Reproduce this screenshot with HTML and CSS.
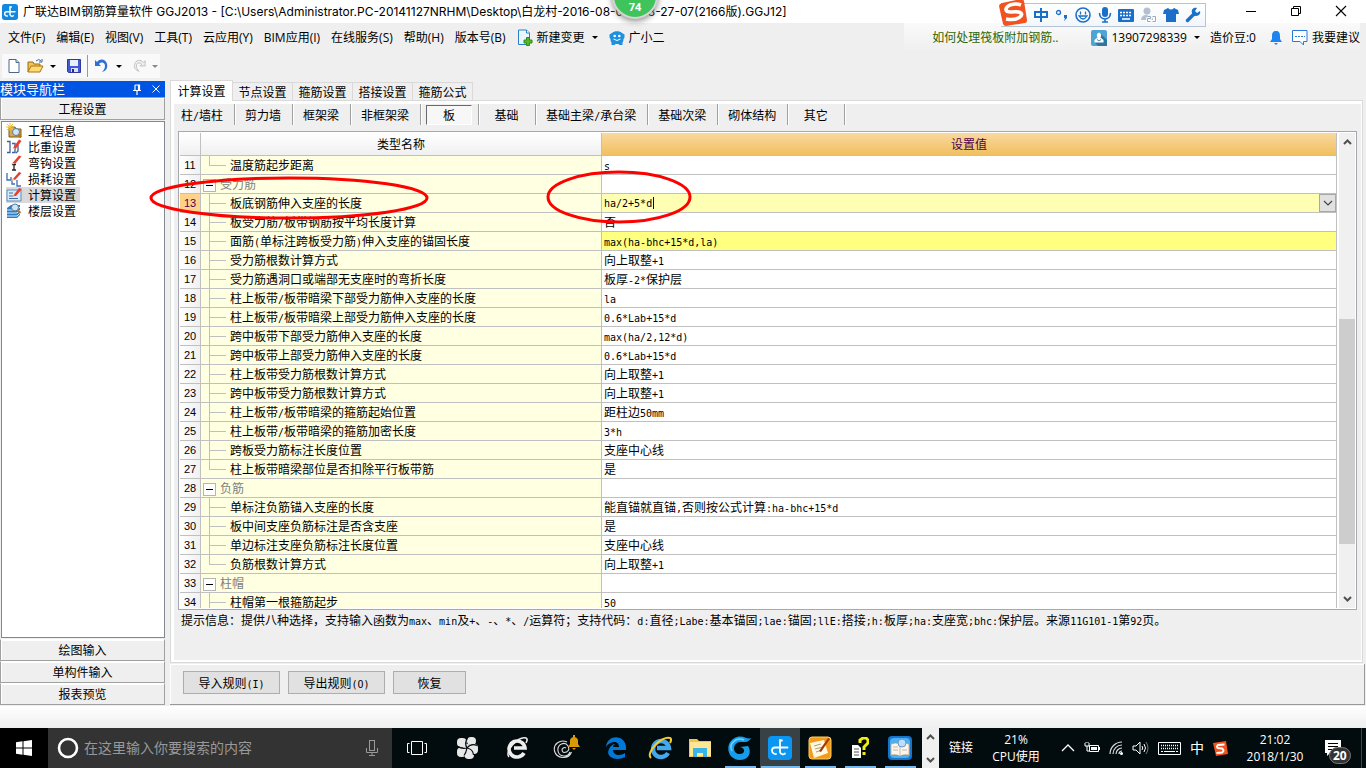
FILE: index.html
```
<!DOCTYPE html>
<html lang="zh-CN">
<head>
<meta charset="utf-8">
<title>广联达BIM钢筋算量软件 GGJ2013</title>
<link rel="stylesheet" href="styles.css">
</head>
<body>
<div class="desktop">
<header class="titlebar">
  <svg class="app-icon" width="16" height="16" viewBox="0 0 24 24"><rect width="24" height="24" rx="4" fill="#1388e0"/><path d="M12 4v12a3 3 0 0 0 5 1.500M8 18a3.500 3.500 0 0 1-4-3.500 3 3 0 0 1 3-3h12.500M14 4.500h-2" fill="none" stroke="#fff" stroke-width="2.200" stroke-linecap="round"/></svg>
  <h1 class="title">广联达BIM钢筋算量软件 GGJ2013 - [C:\Users\Administrator.PC-20141127NRHM\Desktop\白龙村-2016-08-09 - 13-27-07(2166版).GGJ12]</h1>
  <div class="window-buttons">
    <button aria-label="最小化"><svg width="12" height="12" viewBox="0 0 12 12"><path d="M1 6.500h10" stroke="#000"/></svg></button>
    <button aria-label="还原"><svg width="12" height="12" viewBox="0 0 12 12"><path d="M1.500 3.500h7v7h-7zM3.500 3.500v-2h7v7h-2" fill="none" stroke="#000"/></svg></button>
    <button aria-label="关闭"><svg width="12" height="12" viewBox="0 0 12 12"><path d="M1 1l10 10M11 1L1 11" stroke="#000" stroke-width="1.100"/></svg></button>
  </div>
</header>

<nav class="menubar">
  <button>文件(F)</button><button>编辑(E)</button><button>视图(V)</button><button>工具(T)</button><button>云应用(Y)</button><button>BIM应用(I)</button><button>在线服务(S)</button><button>帮助(H)</button><button>版本号(B)</button>
  <button class="with-icon"><svg width="16" height="17" viewBox="0 0 16 17"><path d="M1.500 1h8l3 3v11.500h-11z" fill="#eaf6ff" stroke="#2b7fc4"/><path d="M9.500 1v3h3" fill="#fff" stroke="#2b7fc4"/><path d="M9.500 8.500h3v2.500h2.500v3h-2.500v2.500h-3v-2.500H7v-3h2.500z" fill="#58b530" stroke="#2f8a18"/></svg>新建变更 <i class="arrow"></i></button>
  <button class="with-icon"><svg width="16" height="16" viewBox="0 0 16 16"><path d="M3 3C5 .5 11 .5 13 3l2.500 1.500v3L14.500 9c0 2-.5 3-1 3.500V15h-3l-1-1h-3l-1 1h-3v-2.500C2 12 1.500 11 1.500 9L.5 7.500v-3z" fill="#1f8fe0"/><circle cx="5.700" cy="6" r="1.300" fill="#fff"/><circle cx="10.300" cy="6" r="1.300" fill="#fff"/><path d="M4.500 9q3.500 3 7 0" fill="none" stroke="#fff"/></svg>广小二</button>
  <div class="account">
    <a class="tip-link" href="#">如何处理筏板附加钢筋..</a>
    <button class="with-icon user"><svg width="16" height="16" viewBox="0 0 16 16"><rect width="16" height="16" rx="2" fill="#4fa5d2"/><path d="M10 4l6 6v6H7l-3-3z" fill="#2e769f"/><path d="M8 2.500a2.600 3 0 0 1 1.500 5L12.500 10v2.500h-9V10l3-2.500A2.600 3 0 0 1 8 2.500z" fill="#fff"/><path d="M6 9.500l2 1.500 2-1.500" fill="none" stroke="#3b88b4"/></svg>13907298339 <i class="arrow"></i></button>
    <span class="beans">造价豆:0</span>
    <svg width="12" height="16" viewBox="0 0 12 16"><path d="M6 1c3 0 4 2 4 5v3l2 3H0l2-3V6c0-3 1-5 4-5zM4 13h4l-2 2z" fill="#1f83f0"/></svg>
    <button class="with-icon suggest"><svg width="16" height="16" viewBox="0 0 16 16"><path d="M1 .5h14v11h-3.500V15L8 11.500H.500V.5z" fill="#fff" stroke="#2a78d8"/><path d="M3 6.500h10" stroke="#2a78d8" stroke-dasharray="2 1"/></svg>我要建议</button>
  </div>
</nav>

<div class="toolbar">
  <div class="tools">
    <button aria-label="新建"><svg width="16" height="16" viewBox="0 0 16 16"><path d="M3 1.500h7l3 3v10H3z" fill="#fff" stroke="#4a678c"/><path d="M10 1.500v3h3" fill="#cfe0f3" stroke="#4a678c"/></svg></button>
    <button aria-label="打开"><svg width="17" height="16" viewBox="0 0 17 16"><path d="M1 14V4h5l1 2h6v3" fill="#f3c34e" stroke="#9b6b15"/><path d="M1 14l3-6h12l-3 6z" fill="#ffdb72" stroke="#a87518"/><path d="M9 3q3-3 5 0M15 1v3h-3" fill="none" stroke="#3e6a97"/></svg></button><i class="arrow"></i>
    <button aria-label="保存"><svg width="16" height="16" viewBox="0 0 16 16"><path d="M1.500 1.500h13v13h-12l-1-1z" fill="#4659d4" stroke="#3039a0"/><path d="M4 2h8v6H4z" fill="#e8eefc"/><path d="M5 10h7v4H5z" fill="#dce0f2"/><path d="M6 11h2v3H6z" fill="#27307f"/></svg></button><i class="tool-sep"></i>
    <button aria-label="撤销"><svg width="16" height="16" viewBox="0 0 16 16"><path d="M1 2v6h6L5 6c3-3 6-1 6 2 0 2-1 4-3 6 4-1 6-4 5-8C12 1 6 0 3 4z" fill="#2f6fd4"/></svg></button><i class="arrow"></i>
    <button aria-label="重做"><svg width="14" height="14" viewBox="0 0 16 16"><path d="M15 2v6H9l2-2C8 3 5 5 5 8c0 2 1 4 3 6-4-1-6-4-5-8C4 1 10 0 13 4z" fill="#eee" stroke="#bbb"/></svg></button><i class="arrow dim"></i>
  </div>
</div>

<main class="workspace">
  <aside class="sidebar">
    <div class="side-title"><span>模块导航栏</span>
      <svg width="10" height="11" viewBox="0 0 10 11"><path d="M3 1h4.500v5.500M3 1v5.500M1 6.500h8M5 6.500V11M6.500 1v5" fill="none" stroke="#fff" stroke-width="1.200"/></svg>
      <svg width="10" height="10" viewBox="0 0 10 10"><path d="M1.500 1.500l7 7M8.500 1.500l-7 7" stroke="#fff"/></svg>
    </div>
    <button class="side-button">工程设置</button>
    <ul class="tree">
      <li><svg width="16" height="16" viewBox="0 0 16 16"><path d="M3 4h6l1 2h5v8H3z" fill="#d9a848" stroke="#7a5a1c"/><circle cx="10" cy="9" r="3.500" fill="#cfe6f7" stroke="#557da0"/><path d="M12.500 11.500l2.500 3" stroke="#c07010" stroke-width="2"/><path d="M4 0v8M0 4h8M1 1l6 6M7 1L1 7" stroke="#f4c52c"/></svg>工程信息</li>
      <li><svg width="16" height="16" viewBox="0 0 16 16"><path d="M1 2.500h3v11H1M6 4.500h3v9H6" fill="none" stroke="#3c5f9e" stroke-width="1.300"/><path d="M12 6v6l-2 2" fill="none" stroke="#3c5f9e" stroke-width="1.300"/><path d="M7 9l6-8.500 2.500 1.500L10 9.500z" fill="#e8402e"/><path d="M6.500 10.500L7.200 8.500l2 1z" fill="#f5c79a"/></svg>比重设置</li>
      <li><svg width="16" height="16" viewBox="0 0 16 16"><path d="M6 9.500h4M8 9.500V15M6 15h4" stroke="#222" stroke-width="1.300"/><path d="M6.500 8L13 .5l2.500 1L9 9z" fill="#e8402e"/><path d="M5 9.500L6.500 7.500 8.500 9z" fill="#f5c79a"/></svg>弯钩设置</li>
      <li><svg width="16" height="16" viewBox="0 0 16 16"><path d="M1 2v7h4V6M6 9v4h3M11 9v6h4" fill="none" stroke="#3d6db5" stroke-width="1.300"/><path d="M6 9l7-8 2.500 1L9 9z" fill="#e8402e"/><path d="M5 10l1.500-2.500L9 9z" fill="#f5c79a"/></svg>损耗设置</li>
      <li class="current"><svg width="16" height="16" viewBox="0 0 16 16"><path d="M1 3h14v11H1z" fill="#d7eafb" stroke="#5f8cc0"/><path d="M3 6h4M3 11.500h9M3 9h5" stroke="#3e6da8"/><path d="M7 9l6-8 3 1-6 7z" fill="#e8402e"/><path d="M6 10.500L7.500 8l2 1.500z" fill="#f5c79a"/></svg>计算设置</li>
      <li><svg width="16" height="16" viewBox="0 0 16 16"><path d="M1 5l4-3h9v10l-3 3H1z" fill="#2d7cc4"/><path d="M1 7h10l3-3M1 10h10l3-3M1 13h10l3-3" fill="none" stroke="#d7efff"/><circle cx="9" cy="4.500" r="3.500" fill="#cfe6f2" stroke="#557da0"/><path d="M11.500 7l3 3" stroke="#b07832" stroke-width="2"/></svg>楼层设置</li>
    </ul>
    <button class="side-button">绘图输入</button>
    <button class="side-button">单构件输入</button>
    <button class="side-button">报表预览</button>
  </aside>

  <section class="content">
    <div class="tabs"><button class="active">计算设置</button><button>节点设置</button><button>箍筋设置</button><button>搭接设置</button><button>箍筋公式</button></div>
    <div class="page"><div class="page-inner">
      <div class="subtabs"><button>柱<span class="m">/</span>墙柱</button><button>剪力墙</button><button>框架梁</button><button>非框架梁</button><button class="pressed"><span>板</span></button><button>基础</button><button>基础主梁<span class="m">/</span>承台梁</button><button>基础次梁</button><button>砌体结构</button><button>其它</button></div>
      <div class="grid">
        <div class="grid-view">
        <table>
          <colgroup><col class="c-num"><col class="c-name"><col></colgroup>
          <thead><tr><th></th><th>类型名称</th><th class="hot">设置值</th></tr></thead>
          <tbody>
          <tr><td>11</td><td class="leaf last">温度筋起步距离</td><td><span class="m">s</span></td></tr>
          <tr><td>12</td><td class="group"><button class="fold" aria-label="折叠"></button>受力筋</td><td></td></tr>
          <tr class="editing"><td>13</td><td class="leaf">板底钢筋伸入支座的长度</td><td><div class="combo"><input class="m" type="text" value="ha/2+5*d" aria-label="板底钢筋伸入支座的长度"><i class="caret"></i><button aria-label="展开选项"><svg width="10" height="6" viewBox="0 0 10 6"><path d="M1 1l4 4 4-4" fill="none" stroke="#444" stroke-width="1.200"/></svg></button></div></td></tr>
          <tr><td>14</td><td class="leaf">板受力筋<span class="m">/</span>板带钢筋按平均长度计算</td><td>否</td></tr>
          <tr class="changed"><td>15</td><td class="leaf">面筋<span class="m">(</span>单标注跨板受力筋<span class="m">)</span>伸入支座的锚固长度</td><td><span class="m">max(ha-bhc+15*d,la)</span></td></tr>
          <tr><td>16</td><td class="leaf">受力筋根数计算方式</td><td>向上取整<span class="m">+1</span></td></tr>
          <tr><td>17</td><td class="leaf">受力筋遇洞口或端部无支座时的弯折长度</td><td>板厚<span class="m">-2*</span>保护层</td></tr>
          <tr><td>18</td><td class="leaf">柱上板带<span class="m">/</span>板带暗梁下部受力筋伸入支座的长度</td><td><span class="m">la</span></td></tr>
          <tr><td>19</td><td class="leaf">柱上板带<span class="m">/</span>板带暗梁上部受力筋伸入支座的长度</td><td><span class="m">0.6*Lab+15*d</span></td></tr>
          <tr><td>20</td><td class="leaf">跨中板带下部受力筋伸入支座的长度</td><td><span class="m">max(ha/2,12*d)</span></td></tr>
          <tr><td>21</td><td class="leaf">跨中板带上部受力筋伸入支座的长度</td><td><span class="m">0.6*Lab+15*d</span></td></tr>
          <tr><td>22</td><td class="leaf">柱上板带受力筋根数计算方式</td><td>向上取整<span class="m">+1</span></td></tr>
          <tr><td>23</td><td class="leaf">跨中板带受力筋根数计算方式</td><td>向上取整<span class="m">+1</span></td></tr>
          <tr><td>24</td><td class="leaf">柱上板带<span class="m">/</span>板带暗梁的箍筋起始位置</td><td>距柱边<span class="m">50mm</span></td></tr>
          <tr><td>25</td><td class="leaf">柱上板带<span class="m">/</span>板带暗梁的箍筋加密长度</td><td><span class="m">3*h</span></td></tr>
          <tr><td>26</td><td class="leaf">跨板受力筋标注长度位置</td><td>支座中心线</td></tr>
          <tr><td>27</td><td class="leaf last">柱上板带暗梁部位是否扣除平行板带筋</td><td>是</td></tr>
          <tr><td>28</td><td class="group"><button class="fold" aria-label="折叠"></button>负筋</td><td></td></tr>
          <tr><td>29</td><td class="leaf">单标注负筋锚入支座的长度</td><td>能直锚就直锚<span class="m">,</span>否则按公式计算<span class="m">:ha-bhc+15*d</span></td></tr>
          <tr><td>30</td><td class="leaf">板中间支座负筋标注是否含支座</td><td>是</td></tr>
          <tr><td>31</td><td class="leaf">单边标注支座负筋标注长度位置</td><td>支座中心线</td></tr>
          <tr><td>32</td><td class="leaf last">负筋根数计算方式</td><td>向上取整<span class="m">+1</span></td></tr>
          <tr><td>33</td><td class="group"><button class="fold" aria-label="折叠"></button>柱帽</td><td></td></tr>
          <tr><td>34</td><td class="leaf">柱帽第一根箍筋起步</td><td><span class="m">50</span></td></tr>
          </tbody>
        </table>
        </div>
        <div class="scrollbar">
          <svg width="9" height="6" viewBox="0 0 9 6"><path d="M1 5l3.500-3.500L8 5" fill="none" stroke="#505050" stroke-width="2"/></svg>
          <i class="before"></i><i class="thumb"></i><i class="after"></i>
          <svg width="9" height="6" viewBox="0 0 9 6"><path d="M1 1l3.500 3.500L8 1" fill="none" stroke="#505050" stroke-width="2"/></svg>
        </div>
      </div>
      <p class="hint">提示信息：提供八种选择，支持输入函数为<span class="m">max</span>、<span class="m">min</span>及<span class="m">+</span>、<span class="m">-</span>、<span class="m">*</span>、<span class="m">/</span>运算符；支持代码：<span class="m">d:</span>直径<span class="m">;Labe:</span>基本锚固<span class="m">;lae:</span>锚固<span class="m">;llE:</span>搭接<span class="m">;h:</span>板厚<span class="m">;ha:</span>支座宽<span class="m">;bhc:</span>保护层。来源<span class="m">11G101-1</span>第<span class="m">92</span>页。</p>
    </div></div>
    <div class="actions"><button>导入规则<span class="m">(I)</span></button><button>导出规则<span class="m">(O)</span></button><button class="short">恢复</button></div>
  </section>
</main>
<div class="status"></div>

<footer class="taskbar">
  <button class="start" aria-label="开始"><svg width="16" height="16" viewBox="0 0 16 16"><path d="M0 2.200l6.500-.9v6.200H0zM7.500 1.200L16 0v7.500H7.500zM0 8.500h6.500v6.200L0 13.800zM7.500 8.500H16V16l-8.500-1.200z" fill="#fff"/></svg></button>
  <label class="search"><svg width="22" height="22" viewBox="0 0 22 22"><circle cx="11" cy="11" r="9" fill="none" stroke="#fff" stroke-width="2.600"/></svg><input type="text" placeholder="在这里输入你要搜索的内容" aria-label="搜索"><svg width="12" height="16" viewBox="0 0 12 16"><rect x="3.500" y=".5" width="5" height="10" fill="none" stroke="#999"/><path d="M.5 8v4.500h11V8M6 12.500v3M3 15.500h6" fill="none" stroke="#999"/></svg></label>
  <div class="apps wide">
    <button aria-label="任务视图"><svg width="22" height="16" viewBox="0 0 22 16"><path d="M5.500 1.500h11v13h-11zM3.500 3.500H1.500v9h2M18.500 3.500h2v9h-2" fill="none" stroke="#fff"/></svg></button>
    <button aria-label="风车"><svg width="22" height="22" viewBox="0 0 22 22"><g fill="#e8e8e8"><rect x="1" y="1" width="9.500" height="9" rx="4"/><rect x="11" y="0" width="9" height="8" rx="4"/><rect x="13" y="7" width="9" height="10" rx="4"/><rect x="8.500" y="12" width="9.500" height="10" rx="4"/><rect x="1" y="10.500" width="9" height="9.500" rx="4"/><circle cx="11" cy="11" r="4"/></g><path d="M11 11Q8 6 11.500 1M11 11q4-5 10-2.500M11 11q6 1 6.500 7M11 11q-1 5-3 7.500M11 11Q5 12 2 9.500" fill="none" stroke="#020b0e" stroke-width="1.200"/></svg></button>
    <button aria-label="浏览器"><svg width="24" height="24" viewBox="0 0 24 24"><path d="M19 17a8 8 0 1 1 1-5H9" fill="none" stroke="#eee" stroke-width="3.600"/><path d="M4 21C-1 16 13 0 21 2c2 1 1 3 0 5" fill="none" stroke="#eee" stroke-width="1.500"/></svg></button>
    <button aria-label="通知助手"><svg width="28" height="26" viewBox="0 0 28 26"><path d="M13 13a2.500 2.500 0 1 0-2 4.500c4 0 6-3 4-6.500-3-5-11-2-10 5 1 6 10 7 12 1M14 7C7 4 0 9 1.500 16c2 8 14 9 17 1" fill="none" stroke="#ddd" stroke-width="1.100"/><path d="M15 12l2-3V5c1-4 7-4 8 0v4l2 3zM19 13h4l-2 2zM20 0h2v3h-2z" fill="#d99a09"/></svg></button>
    <button aria-label="Edge"><svg width="22" height="22" viewBox="0 0 22 22"><path d="M1 10C2-3 21-3 21 11v2H8c0 6 8 6 12 3v4C11 25 0 20 4 12c1-3 4-5 6-5-2 1-2 3-2 3h6c0-7-9-6-13 0z" fill="#0078d7"/></svg></button>
  </div>
  <div class="apps">
    <button aria-label="Internet Explorer"><svg width="24" height="24" viewBox="0 0 24 24"><path d="M20 17a8 8 0 1 1 1-5H9" fill="none" stroke="#43a9ec" stroke-width="4.400"/><path d="M3 22C-3 17 14-1 22 2c2 1 1 3 0 5" fill="none" stroke="#f2cb2f" stroke-width="2"/></svg></button>
    <button aria-label="文件资源管理器"><svg width="22" height="20" viewBox="0 0 22 20"><path d="M0 1h8l2 2h12v16H0z" fill="#f0c352"/><path d="M1 4h21v14H1z" fill="#ffe693"/><path d="M4 19v-9h14v9h-4v-4H8v4z" fill="#39b4e8"/></svg></button>
    <button class="running" aria-label="G浏览器"><svg width="24" height="24" viewBox="0 0 24 24"><path d="M23 2C19 4 16-1 9 1-4 5-2 24 12 24c9 0 12-8 8-14l-8 1c6 1 5 7 0 7-8 0-8-11 0-12 5 0 8 1 11-4z" fill="#159cea"/><path d="M4 15C0 7 9 1 16 4" fill="none" stroke="#71d2ff" stroke-width="1.500"/></svg></button>
    <button class="running active" aria-label="广联达"><svg width="24" height="24" viewBox="0 0 24 24"><rect width="24" height="24" rx="4" fill="#0c96f3"/><path d="M12 4v12a3 3 0 0 0 5 1.500M8 18a3.500 3.500 0 0 1-4-3.500 3 3 0 0 1 3-3h12.500M14 4.500h-2" fill="none" stroke="#fff" stroke-width="1.800" stroke-linecap="round"/></svg></button>
    <button class="running" aria-label="记事"><svg width="24" height="24" viewBox="0 0 24 24"><rect x="1" y="1" width="22" height="22" rx="3" fill="#f49a18" stroke="#ffcf62"/><path d="M2 7l14-3 4 13-14 5z" fill="#fff7df"/><path d="M6 10l7-2M7 13l8-2M8 16l6-2" stroke="#a99b80"/><path d="M11 15L20 2l2 1-9 13z" fill="#9b3d11"/></svg></button>
    <button class="running" aria-label="帮助"><svg width="18" height="22" viewBox="0 0 18 22"><path d="M1 8h6l3 3v10H1z" fill="#fff"/><path d="M3 12h5M3 15h5M3 18h5" stroke="#555"/><path d="M9 6V3l3-2h3l2 2v3l-4 4v3M13 15v3" fill="none" stroke="#f5ec12" stroke-width="3"/></svg></button>
    <button class="running" aria-label="阅读"><svg width="24" height="24" viewBox="0 0 24 24"><rect width="24" height="24" rx="4" fill="#1674ce"/><rect x="2" y="2" width="20" height="20" rx="4" fill="#4bb1f2"/><path d="M3 8q5-2 9 0 4-2 9 0v11q-5-1-9 1-4-2-9-1z" fill="#fff5e6" stroke="#b08a60" stroke-width=".6"/><path d="M12 9v11M5 11h5M5 14h5M14 14h5" stroke="#bbb"/><circle cx="14" cy="7" r="4" fill="#b9e0ff" stroke="#6a98cb"/></svg></button>
  </div>
  <div class="task-scroll"><svg width="9" height="6" viewBox="0 0 9 6"><path d="M1 5l3.500-3.500L8 5" fill="none" stroke="#505050" stroke-width="2"/></svg><svg width="9" height="6" viewBox="0 0 9 6"><path d="M1 1l3.500 3.500L8 1" fill="none" stroke="#505050" stroke-width="2"/></svg></div>
  <span class="links">链接</span>
  <div class="cpu">21%<br>CPU使用</div>
  <div class="tray">
    <svg width="14" height="8" viewBox="0 0 14 8"><path d="M1 7l6-6 6 6" fill="none" stroke="#fff" stroke-width="1.300"/></svg>
    <svg width="16" height="12" viewBox="0 0 16 12"><path d="M5.500 3.500h9v6h-9zM15.500 5v3M1 1v3h4V1M2 0v1M4 0v1M3 4v5h2" fill="none" stroke="#fff"/><path d="M7 5h6v3H7z" fill="#fff"/></svg>
    <svg width="14" height="14" viewBox="0 0 14 14"><path d="M1 13A12 12 0 0 1 13 1M4 13a9 9 0 0 1 9-9M7 13a6 6 0 0 1 6-6M10 13a3 3 0 0 1 3-3" fill="none" stroke="#ddd" stroke-width="1.200"/><circle cx="12.500" cy="12.500" r="1.500" fill="#fff"/></svg>
    <svg width="17" height="14" viewBox="0 0 17 14"><path d="M1 5h3l4-4v12L4 9H1z" fill="none" stroke="#fff"/><path d="M10 5q1.500 2 0 4M12 3q3 4 0 8" fill="none" stroke="#fff"/><path d="M14 1q4 6 0 12" fill="none" stroke="#777"/></svg>
    <svg width="23" height="13" viewBox="0 0 23 13"><path d="M.5.5h22v12H.500z" fill="none" stroke="#fff"/><path d="M3 3.500h17M3 6.500h17" stroke="#fff" stroke-dasharray="1 1" stroke-width="1.500"/><path d="M3 9.500h2M6 9.500h11M18 9.500h2" stroke="#fff"/></svg>
    <span class="ime">中</span>
    <svg width="15" height="15" viewBox="0 0 15 15"><path d="M0 2l13-2 2 13-12 2z" fill="#f4511e"/><path d="M11.500 3.500L5 4q-2 2 0 3l4 .5q3 2 0 4l-5.500.5" fill="none" stroke="#fff" stroke-width="2"/></svg>
  </div>
  <div class="clock">21:02<br>2018/1/30</div>
  <button class="notice" aria-label="通知"><svg width="18" height="16" viewBox="0 0 18 16"><path d="M1 0h16v13H6l-3 3v-3H1z" fill="#fff"/><path d="M4 3.500h10M4 6.500h10M4 9.500h6" stroke="#000"/></svg><b>20</b></button>
</footer>
</div>

<svg class="marks" width="700" height="230" viewBox="0 0 700 230"><ellipse cx="289" cy="198" rx="138" ry="20"/><ellipse cx="619" cy="197" rx="71" ry="25"/></svg>
<div class="speed">74</div>
<div class="ime-bar">
  <svg class="sogou" width="28" height="28" viewBox="0 0 28 28"><path d="M3 4L22 0q2 0 3 2l3 19q0 3-2 3L7 27q-2 0-3-2L0 7q0-2 3-3z" fill="#f0531f"/><path d="M22 6q-5-2-11 0c-6 3-5 7 1 7 9-1 12 1 10 4-3 4-9 4-15 3" fill="none" stroke="#fff" stroke-width="3.600"/></svg>
  <svg width="16" height="16" viewBox="0 0 16 16"><path d="M2 5h12v5H2zM8 1v14" fill="none" stroke="#1b6fc8" stroke-width="2"/></svg>
  <svg width="14" height="14" viewBox="0 0 14 14"><circle cx="3.500" cy="4.500" r="2" fill="none" stroke="#1b6fc8" stroke-width="1.300"/><path d="M9 7h3v3l-3 3 1-3H9z" fill="#1b6fc8"/></svg>
  <svg width="16" height="16" viewBox="0 0 16 16"><circle cx="8" cy="8" r="7" fill="none" stroke="#1b6fc8" stroke-width="1.600"/><path d="M5.500 4.500v3M10.500 4.500v3M4 9q4 6 8 0z" fill="none" stroke="#1b6fc8" stroke-width="1.300"/></svg>
  <svg width="14" height="16" viewBox="0 0 14 16"><rect x="4" y="0" width="6" height="10" rx="3" fill="#1b6fc8"/><path d="M1.500 6c0 8 11 8 11 0M7 12v3M4 15h6" fill="none" stroke="#1b6fc8" stroke-width="1.600"/></svg>
  <svg width="16" height="13" viewBox="0 0 16 13"><rect width="16" height="13" rx="1" fill="#1b6fc8"/><path d="M2 3.500h12M2 6.500h12" stroke="#fff" stroke-dasharray="2 1" stroke-width="1.500"/><path d="M4 10h8" stroke="#fff" stroke-width="1.500"/></svg>
  <svg width="17" height="16" viewBox="0 0 17 16"><circle cx="7" cy="4" r="3.500" fill="#b5bfd2"/><path d="M1 13c0-7 12-7 12 0z" fill="#b5bfd2"/><path d="M7.500 9.500h3v2h-3v3h3M12.500 9.500h3v5h-3" fill="none" stroke="#fff" stroke-width="2.600"/><path d="M7.500 9.500h3v2h-3v3h3M12.500 9.500h3v5h-3" fill="none" stroke="#9aa6bd"/></svg>
  <svg width="16" height="14" viewBox="0 0 16 14"><path d="M1 2l4-2q3 3 6 0l4 2 1 4h-3v8H3V6H0z" fill="#1b6fc8"/></svg>
  <svg width="16" height="16" viewBox="0 0 16 16"><path d="M2.500 13.500L9 7" stroke="#1b6fc8" stroke-width="3.400" stroke-linecap="round"/><path d="M15 4l-3 2-2-2 2-3C8 0 6 3 7 6s4 4 7 2q2-2 1-4z" fill="#1b6fc8"/></svg>
</div>
</body>
</html>
```
FILE: styles.css
```
* { box-sizing: border-box; }
body {
  margin: 0;
  font: 12px/16px "Open Sans", "Noto Sans CJK SC", sans-serif;
  color: #000;
  background: #efefef;
}
button, input { font: inherit; color: inherit; padding: 0; margin: 0; border: 0; background: none; }
svg { display: block; flex: none; }
i { flex: none; }
.desktop { display: flex; flex-direction: column; height: 100vh; overflow: hidden; }

/* title bar */
.titlebar { display: flex; align-items: center; height: 23px; padding: 0 19px 0 2px; background: #fff; flex: none; }
.title { margin: 0 auto 0 5px; font: 400 12px/16px Inter, "Noto Sans CJK SC", sans-serif; white-space: nowrap; }
.window-buttons { display: flex; gap: 33px; padding-bottom: 2px; }

/* menu */
.menubar { display: flex; align-items: center; gap: 11px; height: 29px; padding: 0 6px 0 8px; flex: none; white-space: nowrap; }
.with-icon { display: flex; align-items: center; gap: 4px; }
.arrow { width: 0; height: 0; border: 3px solid transparent; border-top-color: #000; border-bottom: 0; margin-left: 3px; }
.arrow.dim { border-top-color: #888; }
.account { display: flex; align-items: center; margin-left: auto; gap: 10px; height: 100%; background: linear-gradient(#fafafa, #efefef); }
.tip-link { padding: 0 23px 0 28px; color: #2e6500; text-decoration: none; }
.beans { padding-right: 4px; }

.toolbar { height: 28px; padding: 2px; flex: none; }
.tools { display: flex; align-items: center; width: 158px; height: 24px; padding: 0 2px; background: #f9f9f9; }
.tools button { padding: 0 3px 0 2px; }
.tools .arrow { margin: 0 8px 0 3px; }
.tool-sep { width: 1px; height: 22px; margin: 0 4px 0 2px; background: #999; }

/* navigation pane */
.workspace { display: flex; flex: 1; min-height: 0; gap: 5px; font-family: "Noto Sans CJK SC", sans-serif; }
.m { font-family: "DejaVu Sans Mono", monospace; font-size: 10px; line-height: 10px; }
.sidebar { display: flex; flex-direction: column; width: 165px; flex: none; padding-bottom: 1px; }
.side-title { display: flex; align-items: center; gap: 9px; height: 17px; padding-right: 4px; border-top: 1px solid #efefef; background: #0054e3; color: #fff; }
.side-title span { flex: 1; font-size: 13px; }
.side-button { height: 22px; flex: none; border: 1px solid #a0a0a0; border-top-color: #fff; box-shadow: inset 1px 1px #fff; text-align: center; }
.side-title + .side-button { height: 23px; border-top-color: #a0a0a0; }
.tree { flex: 1; margin: 1px 0 1px 1px; padding: 1px 4px; border: 1px solid #828790; background: #fff; list-style: none; }
.tree li { display: flex; align-items: center; gap: 6px; width: max-content; height: 16px; padding-right: 4px; }
.tree .current { background: #d9d9d9; }

/* tabs */
.content { display: flex; flex: 1; flex-direction: column; min-width: 0; padding-bottom: 1px; }
.tabs { display: flex; align-items: flex-end; height: 20px; flex: none; }
.tabs button { width: 60px; height: 18px; border: 1px solid #d9d9d9; border-width: 1px 1px 0 0; }
.tabs .active { width: 63px; height: 21px; border-left-width: 1px; background: #fff; margin-bottom: -1px; z-index: 1; }
.page { display: flex; flex: 1; min-height: 0; margin-right: 3px; padding: 3px 1px 2px 3px; border: 1px solid #d9d9d9; background: #fff; }
.page-inner { display: flex; flex: 1; flex-direction: column; min-width: 0; padding: 0 4px; background: #efefef; }
.subtabs { display: flex; height: 21px; margin: 0 -4px 6px; flex: none; }
.subtabs button { min-width: 57px; padding: 0 11px 0 10px; border-right: 1px solid #a0a0a0; box-shadow: 1px 0 #fff; }
.subtabs button:first-child { padding: 0 11px 0 7px; }
.subtabs button.pressed { padding: 0 6px 0 5px; }
.pressed span { display: block; width: 46px; height: 20px; padding-top: 1px; border: 1px solid #fff; border-top-color: #696969; border-left-color: #696969; background: #f7f7f7; }

/* settings grid */
.grid { display: flex; flex: 1; min-height: 0; padding: 1px; gap: 2px; border: 1px solid #a5a8b0; background: #fff; }
.grid-view { flex: 1; min-width: 0; overflow: hidden; }
table { width: 100%; table-layout: fixed; border-collapse: separate; border-spacing: 0; }
.c-num { width: 21px; }
.c-name { width: 401px; }
th { height: 23px; padding: 0; border: 1px solid #c0c0c0; border-width: 0 1px 1px 0; background: linear-gradient(#fff, #f0f0f0); font-weight: 400; }
th.hot { background: linear-gradient(#f9d9a0, #f1bf5f); color: #50004f; }
td { height: 19px; padding: 0 0 0 2px; border: 1px solid #c0c0c0; border-width: 0 1px 1px 0; line-height: 18px; white-space: nowrap; overflow: hidden; }
td:first-child { padding: 0; background: linear-gradient(90deg, #fff, #f0f0f0); text-align: center; font: 11px/18px "Liberation Sans", sans-serif; }
td:nth-child(2) { background-color: #ffffe1; }
.leaf { padding-left: 29px; background-image: linear-gradient(#c0c0c0, #c0c0c0), linear-gradient(#c0c0c0, #c0c0c0); background-repeat: no-repeat; background-size: 1px 100%, 16px 1px; background-position: 8px 0, 9px 9px; }
.leaf.last { background-size: 1px 10px, 16px 1px; }
.group { color: #808080; line-height: 16px; }
.fold { display: inline-block; width: 13px; height: 13px; margin-right: 4px; border: 1px solid #b5b5b5; vertical-align: middle; background: linear-gradient(#000, #000) center / 7px 1px no-repeat #fff; }
.editing td:first-child { background: #ffd28a; color: #50004f; }
.editing td:last-child { background: #ffffb3; }
.changed td:last-child { background: #ffff80; }
.combo { display: flex; align-items: center; height: 18px; }
.combo input { width: 49px; outline: 0; }
.caret { width: 1px; height: 12px; background: #000060; }
.combo button { display: flex; align-items: center; justify-content: center; width: 17px; height: 18px; margin-left: auto; border: 1px solid #a8a8a8; background: #e1e1e1; }
.scrollbar { display: flex; flex-direction: column; align-items: center; width: 16px; padding: 6px 0; background: #f0f0f0; }
.scrollbar .before { flex: 174 0 0; }
.scrollbar .thumb { flex: 224 0 0; width: 16px; background: #cdcdcd; }
.scrollbar .after { flex: 52 0 0; }
.hint { min-height: 50px; margin: 0; padding: 2px 0 0 3px; flex: none; }
.actions { display: flex; gap: 8px; height: 41px; margin: 1px 1px 0 0; padding: 7px 13px; flex: none; border: 1px solid #999; border-width: 0 1px 1px 0; box-shadow: inset 1px 1px #fff; }
.actions button { width: 97px; height: 23px; border: 1px solid #adadad; background: #e1e1e1; }
.actions .short { width: 73px; }
.status { height: 22px; flex: none; background: linear-gradient(#fff, #efefef); }

/* taskbar */
.taskbar { display: flex; align-items: center; height: 40px; flex: none; background: #020b0e; color: #fff; white-space: nowrap; }
.start { display: flex; align-items: center; justify-content: center; width: 48px; height: 40px; background: #000; }
.search { display: flex; align-items: center; gap: 5px; width: 344px; height: 40px; padding: 0 14px 0 9px; background: #333; }
.search input { flex: 1; min-width: 0; font-size: 14px; }
.search input::placeholder { color: #999; opacity: 1; }
.apps { display: flex; }
.apps button { display: flex; align-items: center; justify-content: center; width: 40px; height: 40px; }
.apps.wide button { width: 50px; }
.apps.wide button:last-child { width: 48px; }
.apps .running { background: linear-gradient(#76b9ed, #76b9ed) center bottom / 31px 2px no-repeat; }
.apps .active { background: linear-gradient(#76b9ed, #76b9ed) center bottom / 39px 2px no-repeat #384246; }
.task-scroll { display: flex; flex-direction: column; justify-content: space-between; align-items: center; width: 17px; height: 40px; margin-left: 2px; padding: 6px 0 5px; background: #f0f0f0; }
.links { margin-left: 10px; }
.cpu, .clock { text-align: center; line-height: 17px; }
.cpu { width: 70px; margin-left: 8px; }
.tray { display: flex; align-items: center; gap: 9px; margin-left: auto; }
.ime { font-size: 14px; }
.clock { width: 86px; margin-left: 4px; }
.notice { display: flex; align-items: center; width: 38px; height: 40px; margin: 0 4px 0 6px; border-right: 1px solid #444; }
.notice b { margin: 14px 0 0 -13px; padding: 0 3px; border: 1px solid #777; border-radius: 9px; background: #333; line-height: 15px; }

/* floating overlays */
.marks { position: absolute; left: 0; top: 0; pointer-events: none; }
.marks ellipse { fill: none; stroke: #f00; stroke-width: 3; }
.speed { position: absolute; left: 612px; top: -27px; width: 46px; height: 46px; padding-top: 24px; border: 2px solid #d5d5d5; border-radius: 50%; background: #3fc45c; box-shadow: 0 2px 6px #888; color: #fff; font-size: 11px; font-weight: 700; text-align: center; }
.ime-bar { position: absolute; right: 160px; top: 3px; display: flex; align-items: center; gap: 6px; width: 205px; height: 24px; padding-right: 4px; justify-content: space-between; background: linear-gradient(#fff, #f2f6fa) 24px 0 no-repeat; border: 1px solid #b4c4d6; border-left: 0; }
.sogou { margin: -4px 0 0 -2px; }
```
